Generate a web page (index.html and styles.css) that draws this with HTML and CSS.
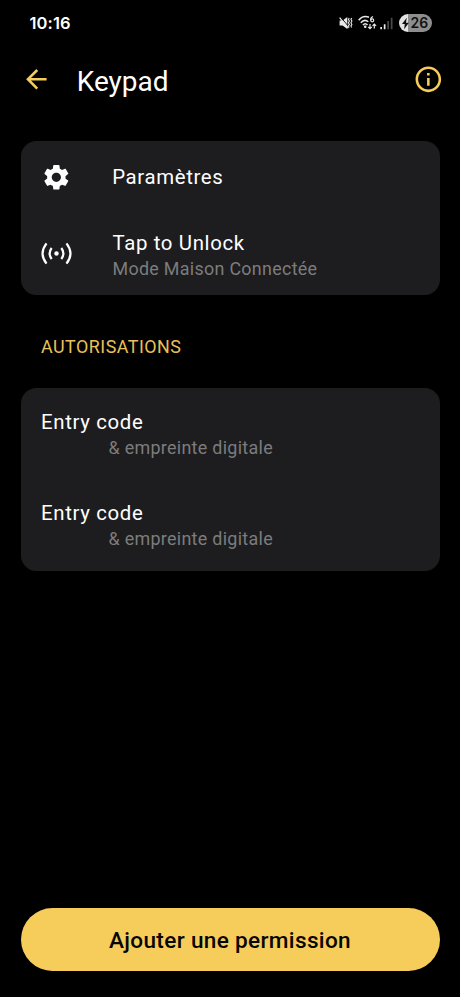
FILE: index.html
```html
<!DOCTYPE html>
<html lang="fr">
<head>
<meta charset="utf-8">
<title>Keypad</title>
<link rel="stylesheet" href="styles.css">
</head>
<body>
<div class="screen">
  <div class="status">
    <span class="time">10:16</span>
    <div class="indicators">
      <svg class="mute" width="14" height="14" viewBox="0 0 14 14" fill="none" stroke="#e8e8e8">
        <path d="M.6 4.400h3L8.300 1v12L3.600 9.600H.6z" fill="#e8e8e8" stroke="none"/>
        <path d="M1.600 1.200l8.400 9.800" stroke="#000" stroke-width="1"/>
        <path d="M.6 1.600l8.800 10.600" stroke-width="1.300"/>
        <path d="M10.200 2l-.8 1.500 1 1.500-1 1.700 1 1.700-1 1.500.8 1.500M12.700 2l-.8 1.500 1 1.500-1 1.700 1 1.700-1 1.500.8 1.500" stroke-width="1.100"/>
      </svg>
      <svg class="wifi" width="19" height="16" viewBox="0 0 19 16" fill="none" stroke="#e8e8e8" stroke-width="1.500">
        <path d="M.7 5.200Q5-.3 11 2.200M2.800 7.700q3.700-4.200 7.500-.9M4.900 10q2.400-2.600 4.600 0"/>
        <circle cx="7.200" cy="11.800" r="1.300" fill="#e8e8e8" stroke="none"/>
        <path d="M15 1.500q-2.700 1-2.300 3.600" stroke-width="1.200"/>
        <circle cx="14.200" cy="5.300" r="1.500" stroke-width="1.200"/>
        <path d="M12 9v4.500m-1.800-1.700L12 13.600l1.800-1.800M16.300 13.500V9m-1.800 1.800L16.300 9l1.800 1.800" stroke-width="1.200"/>
      </svg>
      <svg class="signal" width="13" height="13" viewBox="0 0 13 13">
        <path d="M.3 10h1.700v2.300H.3zM3.800 7.300h1.700v5H3.800z" fill="#e8e8e8"/>
        <path d="M7.300 4H9v8.300H7.300zM10.800.7h1.700v11.600h-1.700z" fill="#4a4a4a"/>
      </svg>
      <div class="battery">
        <svg width="9" height="13" viewBox="0 0 9 13"><path d="M5.700.7L1 7h2.800l-.7 5.200L7.900 5.800H5z" fill="#111"/></svg>
        <span>26</span>
      </div>
    </div>
  </div>

  <header class="appbar">
    <svg class="icon back" viewBox="0 0 24 24"><path d="M20 11H7.830l5.590-5.590L12 4l-8 8 8 8 1.410-1.410L7.830 13H20v-2z"/></svg>
    <h1>Keypad</h1>
    <svg class="icon" viewBox="0 0 24 24"><path d="M11 7h2v2h-2zm0 4h2v6h-2zm1-9C6.480 2 2 6.480 2 12s4.480 10 10 10 10-4.480 10-10S17.520 2 12 2zm0 18c-4.410 0-8-3.590-8-8s3.590-8 8-8 8 3.590 8 8-3.590 8-8 8z"/></svg>
  </header>

  <section class="card options">
    <div class="option settings">
      <svg class="icon" viewBox="0 0 24 24"><path d="M19.140 12.940c.04-.3.06-.61.06-.94 0-.32-.02-.64-.07-.94l2.030-1.580c.18-.14.23-.41.12-.61l-1.920-3.320c-.12-.22-.37-.29-.59-.22l-2.390.96c-.5-.38-1.030-.7-1.620-.94l-.36-2.540c-.04-.24-.24-.41-.48-.41h-3.840c-.24 0-.43.17-.47.41l-.36 2.540c-.59.24-1.130.57-1.620.94l-2.390-.96c-.22-.08-.47 0-.59.22L2.740 8.870c-.12.21-.08.47.12.61l2.030 1.580c-.05.3-.09.63-.09.94s.02.64.07.94l-2.030 1.580c-.18.14-.23.41-.12.61l1.920 3.320c.12.22.37.29.59.22l2.390-.96c.5.38 1.030.7 1.620.94l.36 2.540c.05.24.24.41.48.41h3.840c.24 0 .44-.17.47-.41l.36-2.540c.59-.24 1.130-.56 1.620-.94l2.390.96c.22.08.47 0 .59-.22l1.920-3.320c.12-.22.07-.47-.12-.61l-2.010-1.580zM12 15.600c-1.980 0-3.600-1.620-3.600-3.600s1.620-3.600 3.600-3.600 3.600 1.620 3.600 3.600-1.620 3.600-3.600 3.600z"/></svg>
      <p class="title">Paramètres</p>
    </div>
    <div class="option tap">
      <svg class="icon waves" viewBox="0 0 32 32">
        <circle cx="16" cy="16" r="2.300"/>
        <path d="M11 10.300Q6.800 16 11 21.700M21 10.300q4.200 5.700 0 11.400M5.700 5.500Q-2.500 16 5.700 26.500M26.300 5.500q8.200 10.500 0 21"/>
      </svg>
      <div class="text">
        <p class="title">Tap to Unlock</p>
        <p class="subtitle">Mode Maison Connectée</p>
      </div>
    </div>
  </section>

  <h2>AUTORISATIONS</h2>

  <section class="card">
    <div class="entry">
      <p class="title">Entry code</p>
      <p class="subtitle indented">&amp; empreinte digitale</p>
    </div>
    <div class="entry">
      <p class="title">Entry code</p>
      <p class="subtitle indented">&amp; empreinte digitale</p>
    </div>
  </section>

  <button class="add">Ajouter une permission</button>
</div>
</body>
</html>
```

FILE: styles.css
```css
* { box-sizing: border-box; }
body {
  margin: 0;
  background: #000;
  color: #fff;
  font-family: Roboto, "Liberation Sans", sans-serif;
}
h1, h2, p { margin: 0; font-weight: 400; }
svg { display: block; flex: none; }

.screen {
  display: flex;
  flex-direction: column;
  height: 997px;
  padding: 0 20.5px 26px;
}
.status {
  display: flex;
  justify-content: space-between;
  align-items: center;
  height: 46px;
  padding: 0 8px 0 9px;
}
.time {
  font: 600 16.5px/20px Inter, Roboto, sans-serif;
  letter-spacing: 0.1px;
}
.indicators { display: flex; align-items: center; }
.wifi { margin-left: 5px; }
.signal { margin-left: 3px; }
.battery {
  display: flex;
  align-items: center;
  width: 33px;
  height: 18px;
  margin-left: 6px;
  padding-left: 2px;
  border-radius: 9px;
  background: linear-gradient(90deg, #e4e4e4 9px, #8e8e8e 9px);
  color: #111;
  font: 600 14px/18px Inter, Roboto, sans-serif;
}
.battery span { margin-left: 1px; }

.icon {
  width: 30.7px;
  height: 30.7px;
  fill: #fff;
}
.appbar {
  display: flex;
  align-items: center;
  height: 67px;
  margin-right: -4.5px;
}
.appbar .icon { fill: #f6cd5b; }
h1 {
  flex: 1;
  margin-left: 25.5px;
  font-size: 28px;
  line-height: 36px;
  padding-top: 4px;
}

.card {
  border-radius: 15.5px;
  background: #1d1d1f;
}
.options {
  height: 154px;
  margin-top: 28px;
}
.option {
  display: flex;
  align-items: center;
  gap: 40.5px;
  height: 79px;
  padding-left: 20.5px;
}
.settings { height: 73px; }
.waves { width: 31px; height: 31px; }
.waves path {
  fill: none;
  stroke: #fff;
  stroke-width: 2.3;
}
.text { padding-top: 3px; }
.text .subtitle { line-height: 24px; }
.title {
  font-size: 20.4px;
  line-height: 27px;
  letter-spacing: 0.64px;
}
.subtitle {
  color: #7c7c7d;
  font-size: 17.9px;
  line-height: 25px;
  letter-spacing: 0.3px;
}
h2 {
  height: 92.5px;
  padding: 39px 0 0 20.5px;
  color: #e9c05a;
  font-size: 17.9px;
  line-height: 25px;
  letter-spacing: 0.48px;
}
.entry {
  height: 91.75px;
  padding: 21px 20.5px 0;
}
.entry .subtitle { line-height: 23px; }
.indented { margin-left: 67.5px; }

.add {
  height: 63.5px;
  margin-top: auto;
  padding-top: 4px;
  border: 0;
  border-radius: 32px;
  background: #f6cd5b;
  color: #080602;
  font: 500 22.6px/28px Roboto, "Liberation Sans", sans-serif;
  letter-spacing: 0.33px;
}
```
